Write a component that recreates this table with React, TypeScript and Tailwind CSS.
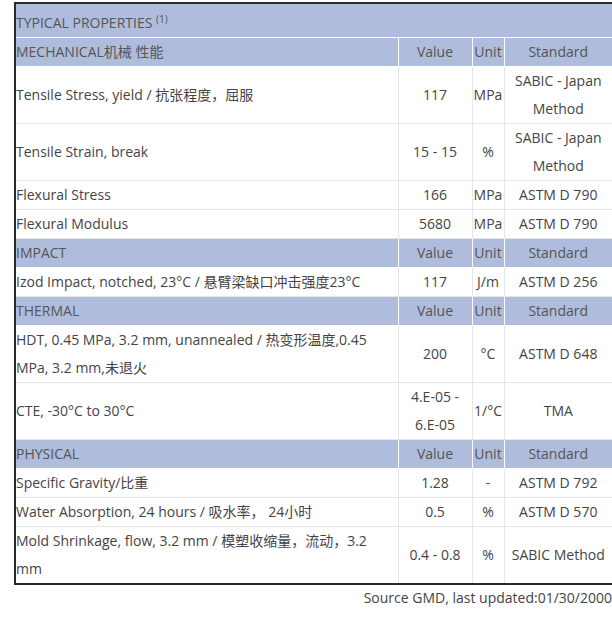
import React from 'react'

type Row = { label: string; value: string; unit: string; standard: string; tall?: boolean }
type Section = { title: string; rows: Row[] }

const sections: Section[] = [
  {
    title: 'MECHANICAL机械 性能',
    rows: [
      { label: 'Tensile Stress, yield / 抗张程度，屈服', value: '117', unit: 'MPa', standard: 'SABIC - Japan Method', tall: true },
      { label: 'Tensile Strain, break', value: '15 - 15', unit: '%', standard: 'SABIC - Japan Method', tall: true },
      { label: 'Flexural Stress', value: '166', unit: 'MPa', standard: 'ASTM D 790' },
      { label: 'Flexural Modulus', value: '5680', unit: 'MPa', standard: 'ASTM D 790' },
    ],
  },
  {
    title: 'IMPACT',
    rows: [{ label: 'Izod Impact, notched, 23°C / 悬臂梁缺口冲击强度23°C', value: '117', unit: 'J/m', standard: 'ASTM D 256' }],
  },
  {
    title: 'THERMAL',
    rows: [
      { label: 'HDT, 0.45 MPa, 3.2 mm, unannealed / 热变形温度,0.45 MPa, 3.2 mm,未退火', value: '200', unit: '°C', standard: 'ASTM D 648' },
      { label: 'CTE, -30°C to 30°C', value: '4.E-05 - 6.E-05', unit: '1/°C', standard: 'TMA', tall: true },
    ],
  },
  {
    title: 'PHYSICAL',
    rows: [
      { label: 'Specific Gravity/比重', value: '1.28', unit: '-', standard: 'ASTM D 792' },
      { label: 'Water Absorption, 24 hours / 吸水率， 24小时', value: '0.5', unit: '%', standard: 'ASTM D 570' },
      { label: 'Mold Shrinkage, flow, 3.2 mm / 模塑收缩量，流动，3.2 mm', value: '0.4 - 0.8', unit: '%', standard: 'SABIC Method' },
    ],
  },
]

const font = { fontFamily: '"Open Sans", "Noto Sans CJK SC", sans-serif' }

export default function App() {
  return (
    <div className="w-[612px] overflow-hidden bg-white pt-[2px] text-[14px] leading-[28px] text-[#444]" style={font}>
      <table className="ml-[14px] w-[600px] table-fixed border-collapse border-2 border-[#2a2a2a]">
        <colgroup>
          <col className="w-[383px]" />
          <col className="w-[74px]" />
          <col className="w-[32px]" />
          <col />
        </colgroup>
        <tbody>
          <tr className="h-[34px] bg-[#b0bcdc] text-[#555]">
            <td colSpan={4} className="border-b border-white p-0 pt-[5px] align-middle">
              TYPICAL PROPERTIES <sup className="text-[10px]">(1)</sup>
            </td>
          </tr>
          {sections.map((s) => (
            <React.Fragment key={s.title}>
              <tr className="bg-[#b0bcdc] text-[#555]">
                <td className="border border-white p-0">{s.title}</td>
                <td className="border border-white p-0 text-center">Value</td>
                <td className="border border-white p-0 text-center">Unit</td>
                <td className="border border-white p-0 text-center">Standard</td>
              </tr>
              {s.rows.map((r) => (
                <tr key={r.label} className={r.tall ? 'h-[57px]' : ''}>
                  <td className="border border-[#e6e6e6] py-0 pl-0 pr-2 align-middle">{r.label}</td>
                  <td className="border border-[#e6e6e6] px-1 py-0 text-center">{r.value}</td>
                  <td className="border border-[#e6e6e6] p-0 text-center">{r.unit}</td>
                  <td className="border border-[#e6e6e6] px-1 py-0 text-center">{r.standard}</td>
                </tr>
              ))}
            </React.Fragment>
          ))}
        </tbody>
      </table>
      <div className="-mt-[1px] text-right">Source GMD, last updated:01/30/2000</div>
    </div>
  )
}
